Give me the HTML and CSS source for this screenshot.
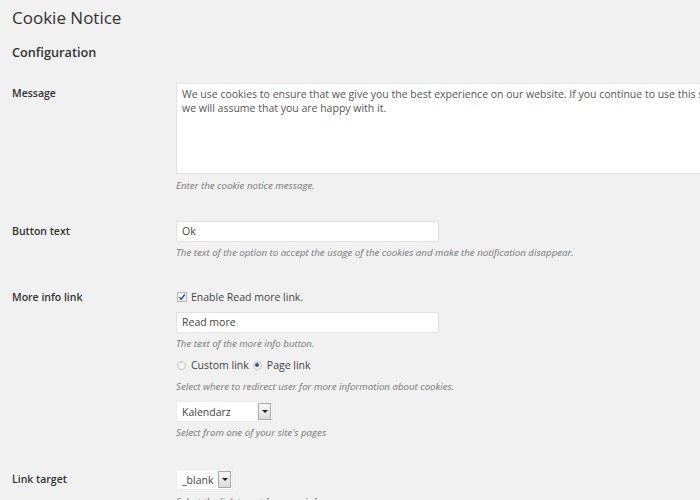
FILE: index.html
```html
<!DOCTYPE html>
<html>
<head>
<meta charset="utf-8">
<link rel="stylesheet" href="styles.css">
</head>
<body>
<div class="page">
  <h1 class="title">Cookie Notice</h1>
  <h2 class="section">Configuration</h2>

  <div class="row row-message">
    <div class="label">Message</div>
    <div class="field">
      <div class="textarea">
        <span class="line">We use cookies to ensure that we give you the best experience on our website. If you continue to use this site</span>
        <span class="line">we will assume that you are happy with it.</span>
      </div>
      <p class="desc">Enter the cookie notice message.</p>
    </div>
  </div>

  <div class="row row-button">
    <div class="label">Button text</div>
    <div class="field">
      <div class="input">Ok</div>
      <p class="desc">The text of the option to accept the usage of the cookies and make the notification disappear.</p>
    </div>
  </div>

  <div class="row row-more">
    <div class="label">More info link</div>
    <div class="field">
      <div class="check-line"><span class="checkbox"><svg width="8" height="8" viewBox="0 0 8 8"><path d="M1.3 4.2 L3.2 6.2 L6.8 1.5" fill="none" stroke="#2a4a78" stroke-width="1.3"/></svg></span><span>Enable Read more link.</span></div>
      <div class="input">Read more</div>
      <p class="desc">The text of the more info button.</p>
      <div class="radio-line"><span class="radio"></span><span>Custom link</span><span class="radio checked"></span><span>Page link</span></div>
      <p class="desc">Select where to redirect user for more information about cookies.</p>
      <div class="select select-page"><span class="select-val">Kalendarz</span><span class="select-btn"><span class="tri"></span></span></div>
      <p class="desc">Select from one of your site's pages</p>
    </div>
  </div>

  <div class="row row-target">
    <div class="label">Link target</div>
    <div class="field">
      <div class="select select-target"><span class="select-val">_blank</span><span class="select-btn"><span class="tri"></span></span></div>
      <p class="desc">Select the link target for more info page.</p>
    </div>
  </div>
</div>
</body>
</html>
```

FILE: styles.css
```css
html, body {
  margin: 0;
  padding: 0;
  background: #f1f1f1;
  overflow: hidden;
}
body {
  font-family: "Open Sans", "Noto Sans", sans-serif;
  color: #444;
  width: 700px;
  height: 500px;
}
.page {
  padding: 0 0 0 12px;
}
.title {
  margin: 0;
  padding-top: 5px;
  font-size: 17px;
  font-weight: 400;
  line-height: 26px;
  color: #333;
}
.section {
  margin: 12px 0 0 0;
  font-size: 12.7px;
  font-weight: 600;
  line-height: 18px;
  color: #333;
}
.row {
  display: grid;
  grid-template-columns: 164px 1fr;
}
.label {
  font-size: 10.5px;
  font-weight: 600;
  color: #333;
  line-height: 14px;
}
.field {
  display: flex;
  flex-direction: column;
  align-items: flex-start;
}
.row-message { margin-top: 22px; }
.row-message .label { padding-top: 3px; }
.textarea {
  box-sizing: border-box;
  width: 600px;
  height: 91px;
  background: #fff;
  border: 1px solid #e2e2e2;
  padding: 3px 5px;
  font-size: 10.5px;
  line-height: 14px;
  color: #555;
}
.line { display: block; white-space: nowrap; }
.desc {
  margin: 5px 0 0 0;
  font-size: 9.7px;
  font-style: italic;
  line-height: 13px;
  color: #777;
}
.input {
  box-sizing: border-box;
  width: 263px;
  height: 21px;
  background: #fff;
  border: 1px solid #e2e2e2;
  padding: 0 5px;
  font-size: 10.5px;
  line-height: 19px;
  color: #444;
}
.row-button { margin-top: 29px; }
.row-button .label { padding-top: 3px; }
.row-button .desc { margin-top: 4px; }
.row-more { margin-top: 31px; }
.row-more .label { padding-top: 0; }
.check-line, .radio-line {
  display: flex;
  align-items: center;
  font-size: 10.5px;
  line-height: 14px;
  color: #444;
}
.check-line { margin-left: 1px; }
.checkbox {
  box-sizing: border-box;
  width: 10px;
  height: 10px;
  border: 1px solid #b4b9be;
  background: #f4f4f4;
  margin-right: 4px;
  display: flex;
  align-items: center;
  justify-content: center;
}
.row-more .input { margin-top: 8px; }
.row-more .desc { margin-top: 4px; }
.radio-line { margin-top: 8px; margin-left: 1px; }
.radio {
  box-sizing: border-box;
  width: 9px;
  height: 9px;
  border-radius: 50%;
  border: 1px solid #c4c4c4;
  background: #f6f6f6;
  margin-right: 5px;
  position: relative;
}
.radio.checked { margin-left: 4px; }
.radio.checked::after {
  content: "";
  position: absolute;
  left: 1.5px;
  top: 1.5px;
  width: 4px;
  height: 4px;
  border-radius: 50%;
  background: #3c5a7a;
}
.radio-line + .desc { margin-top: 8px; }
.select {
  box-sizing: border-box;
  display: flex;
  align-items: center;
  height: 21px;
  background: #fff;
  border: 1px solid #ececec;
  margin-top: 8px;
  padding-left: 5px;
  font-size: 10.5px;
  color: #444;
}
.select-page { width: 97px; }
.select-target { width: 57px; margin-top: 0; }
.select-val { flex: 1; }
.select-btn {
  box-sizing: border-box;
  width: 13px;
  height: 17px;
  margin-right: 1px;
  border: 1px solid #a8a8a8;
  background: linear-gradient(#f8f8f8, #dcdcdc);
  display: flex;
  align-items: center;
  justify-content: center;
}
.tri {
  width: 0;
  height: 0;
  border-left: 3px solid transparent;
  border-right: 3px solid transparent;
  border-top: 3px solid #222;
}
.select + .desc { margin-top: 4px; }
.row-target { margin-top: 30px; }
.row-target .label { padding-top: 3px; }
.row-target .desc { margin-top: 5px; }
```
